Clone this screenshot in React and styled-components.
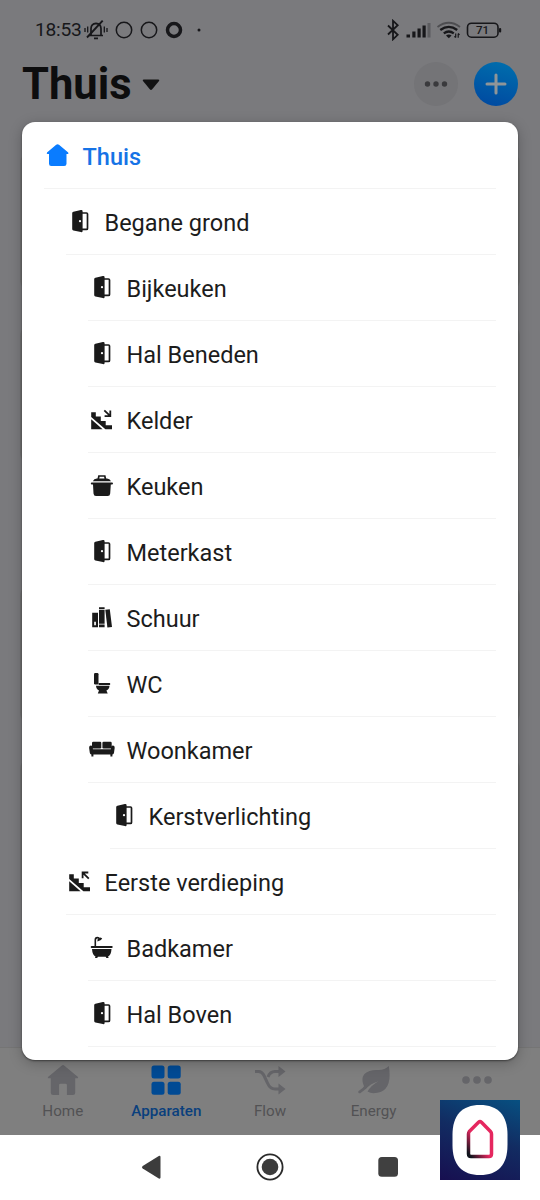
import React from 'react';
import styled, { createGlobalStyle, css } from 'styled-components';

const GlobalStyle = createGlobalStyle`
  * {
    box-sizing: border-box;
  }

  body {
    margin: 0;
    background: #ffffff;
    font-family: Roboto, 'Liberation Sans', sans-serif;
  }

  svg {
    display: block;
    flex-shrink: 0;
  }
`;

const Screen = styled.div`
  position: relative;
  display: flex;
  flex-direction: column;
  width: 540px;
  height: 1200px;
  overflow: hidden;
  background: #7a7a7d;
`;

const StatusBar = styled.div`
  display: flex;
  justify-content: space-between;
  align-items: center;
  height: 60px;
  padding: 0 38px 0 35px;
  color: #17171a;
`;

const StatusGroup = styled.div`
  display: flex;
  align-items: center;
`;

const Time = styled.span`
  width: 49px;
  font-size: 19.2px;
  line-height: 24px;
  letter-spacing: -0.25px;
  white-space: nowrap;
`;

const Header = styled.header`
  display: flex;
  align-items: center;
  height: 48px;
  padding: 0 22px;
`;

const Title = styled.h1`
  margin: 2px 0 0;
  font-size: 43.5px;
  line-height: 48px;
  font-weight: 700;
  color: #0d0d0e;
`;

const Caret = styled.svg`
  margin: 2px auto 0 10px;
`;

const RoundButton = styled.button`
  display: flex;
  align-items: center;
  justify-content: center;
  width: 44px;
  height: 44px;
  margin-left: 16px;
  padding: 0;
  border: none;
  border-radius: 50%;
  color: #3a3a3d;
  background: ${props => props.$primary ? 'linear-gradient(195deg, #0070ad 0%, #0047a0 100%)' : '#747477'};
`;

const Devices = styled.main`
  flex: 1;
  display: flex;
  flex-direction: column;
  padding: 42px 20px 0;
  overflow: hidden;
`;

const DeviceCard = styled.div`
  flex-shrink: 0;
  height: 143px;
  margin-bottom: ${props => props.$last ? '117px' : '30px'};
  border-radius: 14px;
  background: #727272;
`;

const TabBar = styled.nav`
  display: flex;
  height: 88px;
  padding: 0 11px;
  border-top: 1px solid #757575;
  background: #7f7f7f;
`;

const Tab = styled.div`
  flex: 1;
  display: flex;
  flex-direction: column;
  align-items: center;
  padding-top: 16px;
  font-size: 15.2px;
  line-height: 18px;
  color: ${props => props.$active ? '#0a3f7d' : '#525254'};
  font-weight: ${props => props.$active ? 500 : 400};

  svg {
    margin-bottom: 6px;
    color: ${props => props.$active ? '#004a94' : '#656569'};
  }
`;

const NavBar = styled.div`
  display: flex;
  justify-content: space-between;
  align-items: center;
  height: 65px;
  padding: 0 137px 1px 136px;
  background: #ffffff;
`;

const ZoneSheet = styled.div`
  position: absolute;
  top: 122px;
  left: 22px;
  width: 496px;
  height: 938px;
  padding-top: 1px;
  border-radius: 13px;
  background: #ffffff;
  box-shadow: 0 1px 2px rgba(0, 0, 0, 0.45), 0 3px 14px rgba(0, 0, 0, 0.24);
  overflow: hidden;
`;

const ZoneRow = styled.div`
  display: flex;
  align-items: center;
  height: 66px;
  margin-left: ${props => 22 + props.$level * 22}px;
  margin-right: 22px;
  padding-bottom: 2px;
  border-bottom: 1px solid #f3f3f3;
  color: #1a1a1a;

  ${props => props.$selected && css`
    color: #0a7cff;
  `}
`;

const ZoneName = styled.span`
  margin: 4px 0 0 10.5px;
  font-size: 23.5px;
  line-height: 30px;
  font-weight: ${props => props.$selected ? 500 : 400};
  color: ${props => props.$selected ? '#1673e6' : '#1c1c1c'};
  white-space: nowrap;
`;

const AppBadge = styled.div`
  position: absolute;
  left: 440px;
  top: 1100px;
  display: flex;
  align-items: center;
  justify-content: center;
  width: 80px;
  height: 80px;
  background: linear-gradient(200deg, #075081 0%, #122c62 45%, #170f50 100%);
`;

const zoneIcons = {
  house: (
    <path
      d="M12.2 3.8q1.400-1.300 2.800 0l9.200 7.700q.8 1.500-.6 1.500h-1.100v9.700q0 2.300-2.300 2.300H7.200q-2.200 0-2.200-2.300V13H3.700q-1.500 0-.7-1.500z"
      fill="currentColor"
    />
  ),
  door: (
    <>
      <path d="M16 6h4.500q1 0 1 1v14.400q0 1-1 1H16" fill="none" stroke="currentColor" strokeWidth="1.700" />
      <path d="M7.400 4.700 14.900 3q1.700-.3 1.700 1.200v19.700q0 1.500-1.700 1.200l-7.500-1.700q-1.200-.3-1.200-1.400V6.100q0-1.100 1.200-1.400z" fill="currentColor" />
      <circle cx="14" cy="14.200" r="1.100" fill="#fff" />
    </>
  ),
  stairsDown: (
    <>
      <path d="M3.200 7.200h4.600v4.400h5v4.300h4.900v4.300h6.300v4.100h-6.600L3.200 12z" fill="currentColor" />
      <path d="M3.200 14.200 14.600 24.300H3.200z" fill="currentColor" />
      <path d="m16.300 5.300 5.800 5.600M22.300 5.500v5.700h-5.700" fill="none" stroke="currentColor" strokeWidth="1.800" />
    </>
  ),
  stairsUp: (
    <>
      <path d="M3.200 7.200h4.600v4.400h5v4.300h4.900v4.300h6.300v4.100h-6.600L3.200 12z" fill="currentColor" />
      <path d="M3.200 14.200 14.600 24.300H3.200z" fill="currentColor" />
      <path d="m22.800 11.700-5.900-5.900M16.600 11.200V5.500h5.700" fill="none" stroke="currentColor" strokeWidth="1.800" />
    </>
  ),
  pot: (
    <>
      <path d="M10.200 8.500 10.900 5h5.900l.7 3.500" fill="none" stroke="currentColor" strokeWidth="1.700" />
      <path d="M4.800 10.300q1.200-2.500 4-2.700h10.200q2.800.2 4 2.700z" fill="currentColor" />
      <path d="M3.800 11.600h20.200q1 0 1 1t-1 1h-1.200l-.6 8.900q-.2 2.500-2.500 2.500H8q-2.300 0-2.500-2.500L5 13.600H3.800q-1 0-1-1t1-1z" fill="currentColor" />
    </>
  ),
  books: (
    <>
      <path d="M4.200 9.800h5.800v14.500H4.200zM6.200 18.700v3.600h1.700v-3.600z" fill="currentColor" fillRule="evenodd" />
      <path d="M11 4.200h5.600v2H11zM11 7.100h5.600v13.600H11zM11 21.600h5.600v2.700H11z" fill="currentColor" />
      <path d="m17.300 6.700 4.500-.5 2.200 17.700-4.600.5z" fill="currentColor" />
    </>
  ),
  toilet: (
    <>
      <rect x="6" y="4" width="4.500" height="11.400" rx="1.200" fill="currentColor" />
      <rect x="10.500" y="14.100" width="11.700" height="1.800" rx=".6" fill="currentColor" />
      <path d="M8 16.800h13.500q-.2 3.700-3.100 4.800l1.300 2.800H9.800l1.200-2.800Q8.300 20.500 8 16.800z" fill="currentColor" />
    </>
  ),
  sofa: (
    <>
      <rect x="4" y="6.800" width="9.300" height="6.600" rx="1.200" fill="currentColor" />
      <rect x="14.400" y="6.800" width="9.300" height="6.600" rx="1.200" fill="currentColor" />
      <path d="M2.900 10.500q1.900.1 2 2.200v1.500h18v-1.500q.1-2.100 2-2.200 1.800.1 1.800 2.200l-.7 5q-.2 1.500-1.600 1.700v2h-2v-1.900H5.400v1.900h-2v-2q-1.400-.2-1.600-1.700l-.7-5q0-2.100 1.800-2.200z" fill="currentColor" />
    </>
  ),
  bath: (
    <>
      <path d="M7.300 13.500V6.900q0-2.300 2.100-2.300 1.700 0 2 1.300" fill="none" stroke="currentColor" strokeWidth="1.600" />
      <path d="m9.400 8.600.2-2.300 2.700-1.800 1.900.8-1.200 1.600z" fill="currentColor" />
      <rect x="2.700" y="13" width="22" height="1.900" rx=".9" fill="currentColor" />
      <path d="M4 15.900h19.500q-.4 6.300-3.400 7.500l.5 1.500h-2.200l-.7-1.200H9.900l-.7 1.200H7l.5-1.500Q4.400 22.200 4 15.900z" fill="currentColor" />
    </>
  ),
};

const zones = [
  { name: 'Thuis', icon: 'house', level: 0, selected: true },
  { name: 'Begane grond', icon: 'door', level: 1 },
  { name: 'Bijkeuken', icon: 'door', level: 2 },
  { name: 'Hal Beneden', icon: 'door', level: 2 },
  { name: 'Kelder', icon: 'stairsDown', level: 2 },
  { name: 'Keuken', icon: 'pot', level: 2 },
  { name: 'Meterkast', icon: 'door', level: 2 },
  { name: 'Schuur', icon: 'books', level: 2 },
  { name: 'WC', icon: 'toilet', level: 2 },
  { name: 'Woonkamer', icon: 'sofa', level: 2 },
  { name: 'Kerstverlichting', icon: 'door', level: 3 },
  { name: 'Eerste verdieping', icon: 'stairsUp', level: 1 },
  { name: 'Badkamer', icon: 'bath', level: 2 },
  { name: 'Hal Boven', icon: 'door', level: 2 },
];

const MutedBell = () => (
  <svg width="24" height="22" viewBox="0 0 24 22" fill="none" stroke="currentColor" strokeWidth="1.700">
    <path d="M5 16.500h14M7 16V9.500q.2-4.800 5-5.200 4.800.4 5 5.200V16M10 19.300h4" />
    <path d="M18.700 1.700 3 18.500" strokeWidth="1.900" />
    <path d="M1 9v4M3.700 7.500v6M20.300 7.500v6M23 9v4" strokeWidth="1.300" />
  </svg>
);

const NotificationDots = () => (
  <svg width="100" height="20" viewBox="0 0 100 20" fill="none" stroke="currentColor">
    <circle cx="16" cy="10" r="7.700" strokeWidth="1.500" />
    <circle cx="41" cy="10" r="7.700" strokeWidth="1.500" />
    <circle cx="66" cy="10" r="6.500" strokeWidth="3.500" />
    <circle cx="91" cy="10" r="1.500" fill="currentColor" stroke="none" />
  </svg>
);

const StatusIcons = () => (
  <svg width="116" height="22" viewBox="0 0 116 22" fill="none" stroke="currentColor">
    <path d="m2 6.500 9.700 9.300-4.700 4.500V1.800l4.700 4.400L2 15.500" strokeWidth="1.800" />
    <g fill="currentColor" stroke="none">
      <rect x="20.500" y="15.500" width="3.500" height="3" />
      <rect x="26.300" y="12.500" width="3.200" height="6" />
      <rect x="31.500" y="9.500" width="3.200" height="9" />
      <rect x="36.500" y="6.500" width="3.200" height="12" />
      <rect x="41.500" y="4" width="3" height="14.500" opacity=".3" />
    </g>
    <path d="M51.500 8q11.300-8.500 22.500 0" strokeWidth="1.800" opacity=".45" />
    <path d="M54.300 11q8.500-6.300 16.900 0M57.800 14.300q5-3.700 10 0" strokeWidth="2.300" />
    <path d="m60 16.400 2.800 2.800 2.800-2.800q-2.800-1.700-5.600 0z" fill="currentColor" stroke="none" />
    <path d="M69.700 14.500v4m-1.300-1.200 1.300 1.400M72.200 18.700v-4m1.300 1.200-1.300-1.500" strokeWidth="1.200" />
    <rect x="81.500" y="4.200" width="30.500" height="14" rx="4" strokeWidth="1.600" />
    <rect x="113" y="9" width="2.200" height="4.500" rx="1" fill="currentColor" stroke="none" />
    <text x="96.500" y="15.300" textAnchor="middle" fontSize="11.500" fontWeight="500" fill="currentColor" stroke="none">71</text>
  </svg>
);

const MoreDots = ({ gap, r, width }) => (
  <svg width={width} height="32" viewBox={`0 0 ${width} 32`} fill="currentColor">
    <circle cx={width / 2 - gap} cy="16" r={r} />
    <circle cx={width / 2} cy="16" r={r} />
    <circle cx={width / 2 + gap} cy="16" r={r} />
  </svg>
);

const tabs = [
  {
    label: 'Home',
    icon: <path d="M15.200 1.300q.8-.6 1.600 0L31 13q.7 1.300-.7 1.300h-2.100v14.400q0 2.300-2.300 2.300h-6v-10q0-1.300-1.300-1.300h-5.200q-1.300 0-1.300 1.300v10h-6q-2.300 0-2.300-2.300V14.300H1.700Q.3 14.300 1 13z" fill="currentColor" />,
  },
  {
    label: 'Apparaten',
    active: true,
    icon: (
      <g fill="currentColor">
        <rect x="1.500" y="1.500" width="13" height="13" rx="2.500" />
        <rect x="17.700" y="1.500" width="13" height="13" rx="2.500" />
        <rect x="1.500" y="17.700" width="13" height="13" rx="2.500" />
        <rect x="17.700" y="17.700" width="13" height="13" rx="2.500" />
      </g>
    ),
  },
  {
    label: 'Flow',
    icon: (
      <>
        <path d="M1 7.500h3.500q3.500 0 5.500 4l3.500 7.500q2.500 6 7.500 6h5M14 13q2-5.500 7-5.500h5" fill="none" stroke="currentColor" strokeWidth="3" />
        <path d="m24.500 2 7 5.500-7 5.500zM24.500 19.500l7 5.500-7 5.500z" fill="currentColor" />
      </>
    ),
  },
  {
    label: 'Energy',
    icon: (
      <>
        <path d="M30.800 2q4.500 27-15.300 27.200-3.200 0-6-1.700 3.500-6.200 11-10.300-8.500 2.500-13 8.200Q-.2 11 11.500 7q3.500-1.200 9-1 6.500 0 10.300-4z" fill="currentColor" />
        <path d="M1.600 28q4.500-2.500 7.400-7.500" fill="none" stroke="currentColor" strokeWidth="2.600" strokeLinecap="round" />
      </>
    ),
  },
];

export default function App() {
  return (
    <>
      <GlobalStyle />
      <Screen>
        <StatusBar>
          <StatusGroup>
            <Time>18:53</Time>
            <MutedBell />
            <NotificationDots />
          </StatusGroup>
          <StatusIcons />
        </StatusBar>

        <Header>
          <Title>Thuis</Title>
          <Caret width="18" height="12" viewBox="0 0 18 12">
            <path d="M1.700.5h14.600q1.700.2.700 1.600l-6.800 8.200q-1.200 1.200-2.400 0L1 2.100Q0 .7 1.700.5z" fill="#121213" />
          </Caret>
          <RoundButton>
            <MoreDots width={30} gap={8.5} r={2.700} />
          </RoundButton>
          <RoundButton $primary>
            <svg width="22" height="22" viewBox="0 0 22 22" stroke="#8f9598" strokeWidth="3" strokeLinecap="round">
              <path d="M11 2v18M2 11h18" />
            </svg>
          </RoundButton>
        </Header>

        <Devices>
          <DeviceCard />
          <DeviceCard $last />
          <DeviceCard />
          <DeviceCard $last />
        </Devices>

        <TabBar>
          {tabs.map(tab => (
            <Tab key={tab.label} $active={tab.active}>
              <svg width="32" height="32" viewBox="0 0 32 32">{tab.icon}</svg>
              {tab.label}
            </Tab>
          ))}
          <Tab>
            <MoreDots width={32} gap={11} r={3.8} />
          </Tab>
        </TabBar>

        <NavBar>
          <svg width="30" height="30" viewBox="0 0 30 30">
            <path d="M6.700 14 22.800 4q1.700-.6 1.700 1v20.600q0 1.600-1.700 1L6.700 16.600q-1.600-1.300 0-2.600z" fill="#3c3c3c" />
          </svg>
          <svg width="30" height="30" viewBox="0 0 30 30">
            <circle cx="15" cy="15" r="12.600" fill="none" stroke="#2a2a2a" strokeWidth="1.800" />
            <circle cx="15" cy="15" r="8.300" fill="#3c3c3c" />
          </svg>
          <svg width="30" height="30" viewBox="0 0 30 30">
            <rect x="5.300" y="5" width="19.700" height="19.700" rx="3.500" fill="#404040" />
          </svg>
        </NavBar>

        <ZoneSheet>
          {zones.map(zone => (
            <ZoneRow key={zone.name} $level={zone.level} $selected={zone.selected}>
              <svg width="28" height="28" viewBox="0 0 28 28">{zoneIcons[zone.icon]}</svg>
              <ZoneName $selected={zone.selected}>{zone.name}</ZoneName>
            </ZoneRow>
          ))}
        </ZoneSheet>

        <AppBadge>
          <svg width="56" height="70" viewBox="0 0 56 70">
            <defs>
              <linearGradient id="badgeStroke" x1="0" y1="1" x2=".45" y2=".5">
                <stop offset="10%" stopColor="#10131c" />
                <stop offset="90%" stopColor="#e5275f" />
              </linearGradient>
            </defs>
            <path d="M28 0C46 0 55.500 10 55.500 30v10c0 20-9.500 30-27.500 30S.5 60 .5 40V30C.5 10 10 0 28 0z" fill="#fff" />
            <path
              d="M17.300 26.500 26.500 17.300q1.500-1.300 3 0l9 9.200q1 1 1 2.500v20q0 2.500-2.500 2.500H19q-2.500 0-2.500-2.500V29q0-1.500.8-2.500z"
              fill="none"
              stroke="url(#badgeStroke)"
              strokeWidth="3.500"
            />
          </svg>
        </AppBadge>
      </Screen>
    </>
  );
}
